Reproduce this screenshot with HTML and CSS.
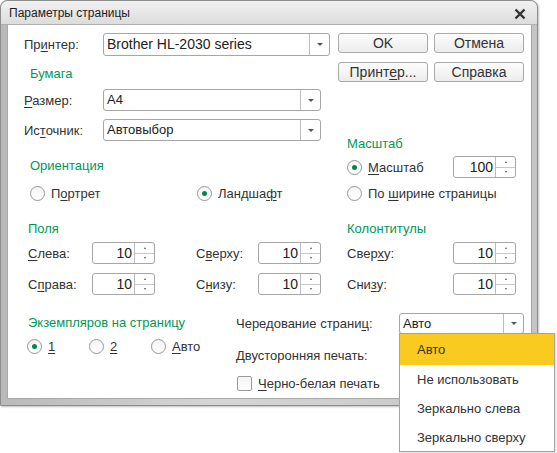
FILE: index.html
```html
<!DOCTYPE html>
<html lang="ru">
<head>
  <meta charset="UTF-8" />
  <title>Параметры страницы</title>
  <link rel="stylesheet" href="styles.css">
</head>
<body>

<div class="window">
  <div class="titlebar">
    <span class="title">Параметры страницы</span>
    <svg class="close" width="12" height="12" viewBox="0 0 12 12"><path d="M1.5 1.5 L10.5 10.5 M10.5 1.5 L1.5 10.5" stroke="#333" stroke-width="2.4"/></svg>
  </div>

  <div class="content">
    <div class="upper">
      <!-- left column -->
      <div class="left">
        <div class="row printer">
          <span class="lbl w79">Пр<u>и</u>нтер:</span>
          <div class="combo w227"><span class="val">Brother HL-2030 series</span><span class="drop"><i></i></span></div>
        </div>
        <div class="group paper">Бумага</div>
        <div class="row size">
          <span class="lbl w79"><u>Р</u>азмер:</span>
          <div class="combo w218"><span class="val">A4</span><span class="drop"><i></i></span></div>
        </div>
        <div class="row source">
          <span class="lbl w79">Ис<u>т</u>очник:</span>
          <div class="combo w218"><span class="val">Автовыбор</span><span class="drop"><i></i></span></div>
        </div>

        <div class="group orient">Ориентация</div>
        <div class="radios orient-opts">
          <label class="radio w167"><span class="dot"></span><span>П<u>о</u>ртрет</span></label>
          <label class="radio"><span class="dot on"></span><span>Ландша<u>ф</u>т</span></label>
        </div>

        <div class="group margins">Поля</div>
        <div class="row spins first">
          <span class="lbl w64"><u>С</u>лева:</span>
          <div class="spin"><span class="num">10</span><span class="arrows"><i class="up"></i><i class="down"></i></span></div>
          <span class="lbl w62 gap41">С<u>в</u>ерху:</span>
          <div class="spin"><span class="num">10</span><span class="arrows"><i class="up"></i><i class="down"></i></span></div>
        </div>
        <div class="row spins">
          <span class="lbl w64">С<u>п</u>рава:</span>
          <div class="spin"><span class="num">10</span><span class="arrows"><i class="up"></i><i class="down"></i></span></div>
          <span class="lbl w62 gap41">С<u>н</u>изу:</span>
          <div class="spin"><span class="num">10</span><span class="arrows"><i class="up"></i><i class="down"></i></span></div>
        </div>
      </div>

      <!-- right column -->
      <div class="right">
        <div class="btns">
          <button>OK</button>
          <button>Отмена</button>
        </div>
        <div class="btns second">
          <button>Принт<u>е</u>р...</button>
          <button>Справка</button>
        </div>

        <div class="group scale">Масштаб</div>
        <div class="row scale-row">
          <label class="radio w106"><span class="dot on"></span><span><u>М</u>асштаб</span></label>
          <div class="spin w62"><span class="num">100</span><span class="arrows"><i class="up"></i><i class="down"></i></span></div>
        </div>
        <div class="radios fit">
          <label class="radio"><span class="dot"></span><span>По <u>ш</u>ирине страницы</span></label>
        </div>

        <div class="group headers">Колонтитулы</div>
        <div class="row spins first">
          <span class="lbl w106">Свер<u>х</u>у:</span>
          <div class="spin w62"><span class="num">10</span><span class="arrows"><i class="up"></i><i class="down"></i></span></div>
        </div>
        <div class="row spins">
          <span class="lbl w106">Сни<u>з</u>у:</span>
          <div class="spin w62"><span class="num">10</span><span class="arrows"><i class="up"></i><i class="down"></i></span></div>
        </div>
      </div>
    </div>

    <div class="lower">
      <div class="copies">
        <div class="group">Экземпляров на страницу</div>
        <div class="radios copies-opts">
          <label class="radio w62"><span class="dot on"></span><span><u>1</u></span></label>
          <label class="radio w62"><span class="dot"></span><span><u>2</u></span></label>
          <label class="radio"><span class="dot"></span><span><u>А</u>вто</span></label>
        </div>
      </div>
      <div class="duplex">
        <div class="row alt">
          <span class="lbl w163">Чередование страни<u>ц</u>:</span>
          <div class="combo w125"><span class="val">Авто</span><span class="drop"><i></i></span></div>
        </div>
        <div class="line twoside">Двусторонняя печать:</div>
        <label class="check"><span class="box"></span><span><u>Ч</u>ерно-белая печать</span></label>
      </div>
    </div>
  </div>
</div>

<!-- dropdown list of the "Чередование страниц" field -->
<div class="popup">
  <div class="item sel">Авто</div>
  <div class="item">Не использовать</div>
  <div class="item">Зеркально слева</div>
  <div class="item">Зеркально сверху</div>
</div>

</body>
</html>
```

FILE: styles.css
```css
* { box-sizing: border-box; }
body {
  margin: 0;
  background: #fff;
  font-family: "Liberation Sans", Arial, sans-serif;
  font-size: 13px;
  color: #333;
  position: relative;
  width: 557px;
  height: 453px;
  overflow: hidden;
}
u { text-decoration: underline; text-underline-offset: 2px; }

/* window frame */
.window {
  width: 538px;
  height: 406px;
  background: linear-gradient(90deg, #b9b9b9, #d6d6d6 40%, #c4c4c4);
  border: 1px solid #8d8d8d;
  border-radius: 7px 7px 0 0;
  padding: 0 5px 6px 6px;
  display: flex;
  flex-direction: column;
  box-shadow: 1px 1px 2px rgba(0,0,0,0.25);
}
.titlebar {
  height: 24px;
  display: flex;
  align-items: center;
  justify-content: space-between;
  margin: 0 -5px 0 -6px;
  padding-left: 8px;
  padding-right: 11px;
  background: linear-gradient(#f2f2f2, #dcdcdc);
  border-radius: 7px 7px 0 0;
  border-bottom: 1px solid #b0b0b0;
  font-size: 12px;
  color: #222;
}
.close { margin-top: 2px; }

.content {
  flex: 1;
  background: #fff;
  border: 1px solid #a8a8a8;
  border-top: none;
  padding: 8px 7px 0 16px;
}

/* layout blocks */
.upper { display: flex; gap: 8px; }
.left { width: 306px; }
.right { width: 186px; }
.lower { display: flex; }
.copies { width: 213px; padding-left: 4px; padding-top: 20px; }
.duplex { padding-top: 18px; }

.row { display: flex; align-items: center; }
.lbl { flex: none; white-space: nowrap; }
.w62 { width: 62px; }
.w64 { width: 64px; }
.w79 { width: 79px; }
.w106 { width: 106px; }
.w163 { width: 163px; }
.w167 { width: 167px; }
.gap41 { margin-left: 41px; }

.group {
  color: #00985a;
  line-height: 15px;
  height: 15px;
}
.paper { margin-top: 10px; padding-left: 6px; }
.size { margin-top: 8px; }
.source { margin-top: 8px; }
.orient { margin-top: 17px; padding-left: 6px; }
.orient-opts { margin-top: 13px; padding-left: 6px; }
.margins { margin-top: 20px; padding-left: 4px; }
.spins { margin-top: 9px; }
.spins.first { margin-top: 6px; }
.left .spins { padding-left: 4px; }
.right .spins, .right .group, .scale-row, .fit { padding-left: 9px; }
.scale { margin-top: 54px; }
.scale-row { margin-top: 5px; }
.fit { margin-top: 8px; }
.headers { margin-top: 20px; }

/* combo box */
.combo {
  display: flex;
  height: 23px;
  border: 1px solid #a6a6a6;
  border-radius: 3px;
  background: #fff;
}
.size .combo, .source .combo { height: 22px; }
.alt .combo { height: 21px; }
.w227 { width: 227px; }
.w218 { width: 218px; }
.w125 { width: 125px; }
.combo .val {
  flex: 1;
  padding-left: 3px;
  line-height: 20px;
  color: #222;
}
.printer .combo .val { font-size: 14px; }
.combo .drop {
  width: 20px;
  border-left: 1px solid #bdbdbd;
  display: flex;
  align-items: center;
  justify-content: center;
}
.combo .drop i {
  border-left: 3px solid transparent;
  border-right: 3px solid transparent;
  border-top: 3px solid #555;
}

/* spin box */
.spin {
  display: flex;
  width: 63px;
  height: 22px;
  border: 1px solid #a6a6a6;
  border-radius: 3px;
}
.spin .num {
  flex: 1;
  text-align: right;
  padding-right: 2px;
  font-size: 14px;
  line-height: 20px;
  color: #222;
}
.spin .arrows {
  width: 20px;
  border-left: 1px solid #bdbdbd;
  display: flex;
  flex-direction: column;
}
.spin .arrows i {
  flex: 1;
  display: flex;
  align-items: center;
  justify-content: center;
}
.spin .arrows i.up { border-bottom: 1px solid #c8c8c8; }
.spin .arrows i::after {
  content: "";
  border-left: 1.5px solid transparent;
  border-right: 1.5px solid transparent;
}
.spin .arrows i.up::after { border-bottom: 2px solid #555; }
.spin .arrows i.down::after { border-top: 2px solid #555; }

/* buttons */
.btns { display: flex; gap: 6px; }
.btns.second { margin-top: 9px; }
.btns button {
  width: 90px;
  height: 20px;
  padding: 0;
  border: 1px solid #a9a9a9;
  border-radius: 3px;
  background: linear-gradient(#fdfdfd, #ececec);
  font-family: inherit;
  font-size: 14px;
  color: #333;
}

/* radios */
.radios { display: flex; align-items: center; }
.radio { display: flex; align-items: center; height: 15px; flex: none; white-space: nowrap; }
.dot {
  width: 15px;
  height: 15px;
  border: 1px solid #979797;
  border-radius: 50%;
  background: linear-gradient(#f4f4f4, #fff);
  margin-right: 6px;
  display: flex;
  align-items: center;
  justify-content: center;
  flex: none;
}
.dot.on::after {
  content: "";
  width: 5px;
  height: 5px;
  border-radius: 50%;
  background: #00874f;
}
.copies-opts { margin-top: 9px; margin-left: -1px; }

/* duplex block */
.twoside { margin-top: 14px; line-height: 15px; }
.check { display: flex; align-items: center; margin-top: 13px; padding-left: 1px; }
.check .box {
  width: 15px;
  height: 15px;
  border: 1px solid #9a9a9a;
  border-radius: 2px;
  margin-right: 6px;
  background: linear-gradient(#f4f4f4, #fff);
}

/* drop-down list */
.popup {
  position: absolute;
  left: 399px;
  top: 333px;
  width: 156px;
  height: 119px;
  background: #fff;
  border: 1px solid #a3a3a3;
  box-shadow: 1px 1px 2px rgba(0,0,0,0.15);
}
.popup .item {
  height: 29px;
  line-height: 29px;
  padding-left: 17px;
  color: #333;
}
.popup .item.sel { background: #f9ca20; height: 31px; line-height: 31px; }
```
